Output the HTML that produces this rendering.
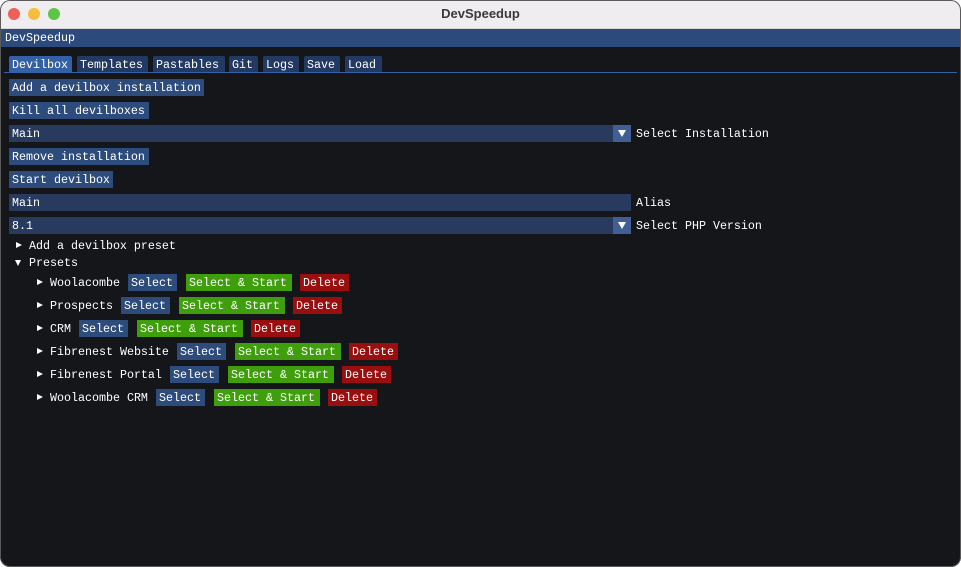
<!DOCTYPE html>
<html><head><style>
*{margin:0;padding:0;box-sizing:border-box}
body{width:961px;height:567px;background:#fff;overflow:hidden;font-family:"Liberation Mono",monospace;font-size:11.67px;color:#fff;position:relative}
.win{position:absolute;left:0;top:0;width:961px;height:567px;border-radius:10px;overflow:hidden;background:#151619}
.edge{position:absolute;left:0;top:0;width:961px;height:567px;border-radius:10px;box-shadow:inset 0 0 0 1px #5a5a5a;pointer-events:none}
.tb{position:absolute;left:0;top:0;width:100%;height:29px;background:#efedef;border-bottom:1px solid #d8d6d8}
.tb .t{position:absolute;width:100%;text-align:center;top:6px;font-family:"Liberation Sans",sans-serif;font-weight:bold;font-size:13px;color:#3a3a3a}
.dot{position:absolute;top:8px;width:12px;height:12px;border-radius:50%}
.it{position:absolute;left:0;top:29px;width:100%;height:18px;background:#2c4a7c;padding:1px 5px;line-height:16px}
.a{position:absolute;height:17px;line-height:18px;padding-left:3px;white-space:pre}
.btn{background:#2d4b7b}
.tab{background:#213963;top:56px;border-radius:2px 2px 0 0}
.tabon{background:#3461a5}
.frame{background:#283a5e}
.g{background:#3f9e0c}
.r{background:#990e0e}
.arr{position:absolute;width:18px;height:17px;background:#3f5f95}
.arr:after{content:"";position:absolute;left:5px;top:5px;border-left:4px solid transparent;border-right:4px solid transparent;border-top:7px solid #fff}
.tri{position:absolute;width:0;height:0}
.tr{border-top:3.5px solid transparent;border-bottom:3.5px solid transparent;border-left:6px solid #fff}
.td{border-left:3.5px solid transparent;border-right:3.5px solid transparent;border-top:6px solid #fff}
.lbl{position:absolute;line-height:18px;white-space:pre}
</style></head><body>
<div class="win">
<div class="tb"><div class="dot" style="left:8px;background:#ed5f57"></div><div class="dot" style="left:28px;background:#f5bd3c"></div><div class="dot" style="left:48px;background:#5cc544"></div><div class="t">DevSpeedup</div></div>
<div class="it">DevSpeedup</div>
<div class="a tab tabon" style="left:9px;width:63px">Devilbox</div>
<div class="a tab" style="left:77px;width:71px">Templates</div>
<div class="a tab" style="left:153px;width:72px">Pastables</div>
<div class="a tab" style="left:229px;width:29px">Git</div>
<div class="a tab" style="left:263px;width:36px">Logs</div>
<div class="a tab" style="left:304px;width:36px">Save</div>
<div class="a tab" style="left:345px;width:37px">Load</div>
<div style="position:absolute;left:4px;top:72px;width:953px;height:1px;background:#3461a5"></div>
<div class="a btn" style="left:9px;top:79px;width:195px">Add a devilbox installation</div>
<div class="a btn" style="left:9px;top:102px;width:140px">Kill all devilboxes</div>
<div class="a frame" style="left:9px;top:125px;width:622px">Main</div><div class="arr" style="left:613px;top:125px"></div>
<div class="lbl" style="left:636px;top:125px">Select Installation</div>
<div class="a btn" style="left:9px;top:148px;width:140px">Remove installation</div>
<div class="a btn" style="left:9px;top:171px;width:104px">Start devilbox</div>
<div class="a frame" style="left:9px;top:194px;width:622px">Main</div>
<div class="lbl" style="left:636px;top:194px">Alias</div>
<div class="a frame" style="left:9px;top:217px;width:622px">8.1</div><div class="arr" style="left:613px;top:217px"></div>
<div class="lbl" style="left:636px;top:217px">Select PHP Version</div>
<div class="tri tr" style="left:16px;top:242px"></div><div class="lbl" style="left:29px;top:237px">Add a devilbox preset</div>
<div class="tri td" style="left:15px;top:260px"></div><div class="lbl" style="left:29px;top:254px">Presets</div>

<div class="tri tr" style="left:37px;top:279px"></div><div class="lbl" style="left:50px;top:274px">Woolacombe</div>
<div class="a btn" style="left:128px;top:274px;width:49px">Select</div><div class="a g" style="left:186px;top:274px;width:106px">Select &amp; Start</div><div class="a r" style="left:300px;top:274px;width:49px">Delete</div>

<div class="tri tr" style="left:37px;top:302px"></div><div class="lbl" style="left:50px;top:297px">Prospects</div>
<div class="a btn" style="left:121px;top:297px;width:49px">Select</div><div class="a g" style="left:179px;top:297px;width:106px">Select &amp; Start</div><div class="a r" style="left:293px;top:297px;width:49px">Delete</div>

<div class="tri tr" style="left:37px;top:325px"></div><div class="lbl" style="left:50px;top:320px">CRM</div>
<div class="a btn" style="left:79px;top:320px;width:49px">Select</div><div class="a g" style="left:137px;top:320px;width:106px">Select &amp; Start</div><div class="a r" style="left:251px;top:320px;width:49px">Delete</div>

<div class="tri tr" style="left:37px;top:348px"></div><div class="lbl" style="left:50px;top:343px">Fibrenest Website</div>
<div class="a btn" style="left:177px;top:343px;width:49px">Select</div><div class="a g" style="left:235px;top:343px;width:106px">Select &amp; Start</div><div class="a r" style="left:349px;top:343px;width:49px">Delete</div>

<div class="tri tr" style="left:37px;top:371px"></div><div class="lbl" style="left:50px;top:366px">Fibrenest Portal</div>
<div class="a btn" style="left:170px;top:366px;width:49px">Select</div><div class="a g" style="left:228px;top:366px;width:106px">Select &amp; Start</div><div class="a r" style="left:342px;top:366px;width:49px">Delete</div>

<div class="tri tr" style="left:37px;top:394px"></div><div class="lbl" style="left:50px;top:389px">Woolacombe CRM</div>
<div class="a btn" style="left:156px;top:389px;width:49px">Select</div><div class="a g" style="left:214px;top:389px;width:106px">Select &amp; Start</div><div class="a r" style="left:328px;top:389px;width:49px">Delete</div>
<div class="edge"></div>
</div>
</body></html>
